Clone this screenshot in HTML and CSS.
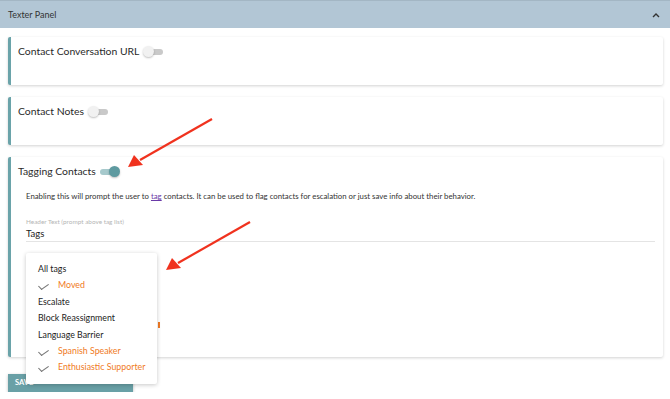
FILE: index.html
```html
<!DOCTYPE html>
<html lang="en">
<head>
    <meta charset="UTF-8">
    <title>Texter Panel</title>
    <link rel="stylesheet" href="styles.css">
</head>
<body>
    <div class="panel-header">
        <span>Texter Panel</span>
        <svg class="chevron" width="8" height="6" viewBox="0 0 8 6"><path d="M1 5 L4 2 L7 5" fill="none" stroke="#333" stroke-width="1.4"/></svg>
    </div>

    <div class="panel-body">
        <section class="card short">
            <div class="card-title">
                Contact Conversation URL
                <span class="toggle"><span class="knob"></span></span>
            </div>
        </section>

        <section class="card short">
            <div class="card-title">
                Contact Notes
                <span class="toggle"><span class="knob"></span></span>
            </div>
        </section>

        <section class="card tall">
            <div class="card-title">
                Tagging Contacts
                <span class="toggle on"><span class="knob"></span></span>
            </div>
            <p class="desc">Enabling this will prompt the user to <a href="#">tag</a> contacts. It can be used to flag contacts for escalation or just save info about their behavior.</p>
            <div class="field">
                <label>Header Text (prompt above tag list)</label>
                <div class="field-value">Tags</div>
            </div>
            <span class="chip-edge"></span>
        </section>

        <button class="save-button">Save</button>
    </div>

    <ul class="tag-menu">
        <li>All tags</li>
        <li class="checked">Moved</li>
        <li>Escalate</li>
        <li>Block Reassignment</li>
        <li>Language Barrier</li>
        <li class="checked">Spanish Speaker</li>
        <li class="checked">Enthusiastic Supporter</li>
    </ul>

    <svg class="arrows" width="670" height="399" viewBox="0 0 670 399">
        <line x1="212" y1="119" x2="140" y2="160" stroke="#f0321e" stroke-width="2.2"/>
        <polygon points="128,167 134,155 143,165" fill="#f0321e"/>
        <line x1="250" y1="222" x2="178" y2="263" stroke="#f0321e" stroke-width="2.2"/>
        <polygon points="166,270 172,258 181,268" fill="#f0321e"/>
    </svg>
</body>
</html>
```

FILE: styles.css
```css
body {
    margin: 0;
    font-family: "Lato", "Noto Sans", sans-serif;
    color: #222;
    background-color: #fff;
    position: relative;
}

.panel-header {
    height: 27px;
    background-color: #b2c6d5;
    border-top: 1px solid #a3b6c4;
    display: flex;
    align-items: center;
    justify-content: space-between;
    padding: 0 10px 0 8px;
    font-size: 9px;
    color: #333;
}

.panel-body {
    padding: 9px 7px 0 8px;
}

.card {
    background-color: #fff;
    border-left: 3px solid #6aa3a9;
    box-shadow: 0 1px 3px rgba(0, 0, 0, 0.18);
    border-radius: 2px;
    margin-bottom: 12px;
    padding: 8px 8px 0 7px;
    box-sizing: border-box;
}

.card.short {
    height: 48px;
}

.card.tall {
    height: 200px;
    position: relative;
}

.card-title {
    display: flex;
    align-items: center;
    gap: 4px;
    font-size: 10.4px;
    height: 12px;
    color: #2a2a2a;
}

.toggle {
    position: relative;
    width: 20px;
    height: 11px;
    display: inline-block;
}

.toggle::before {
    content: "";
    position: absolute;
    left: 3px;
    right: 0;
    top: 3px;
    height: 6px;
    border-radius: 3px;
    background-color: #c9c9c9;
}

.toggle .knob {
    position: absolute;
    left: 0;
    top: 0;
    width: 11px;
    height: 11px;
    border-radius: 50%;
    background-color: #f1f1f1;
    box-shadow: 0 1px 2px rgba(0, 0, 0, 0.25);
}

.toggle.on::before {
    background-color: #a6c9cc;
    left: 0;
    right: 3px;
}

.toggle.on .knob {
    left: auto;
    right: 0;
    background-color: #5e9aa0;
}

.desc {
    font-size: 7.8px;
    margin: 14px 0 0 8px;
    color: #333;
}

.desc a {
    color: #6a3aa8;
}

.field {
    margin: 17px 0 0 8px;
    border-bottom: 1px solid #e4e4e4;
    padding-bottom: 2px;
}

.field label {
    display: block;
    font-size: 6.4px;
    color: #b5b5b5;
}

.field-value {
    font-size: 9.5px;
    margin-top: 3px;
    color: #222;
}

.chip-edge {
    position: absolute;
    left: 147px;
    top: 165px;
    width: 1.5px;
    height: 6px;
    background-color: #f07a24;
}

.save-button {
    width: 125px;
    height: 18px;
    margin-top: 0;
    border: none;
    background-color: #69a0a6;
    color: #fff;
    font-family: "Lato", sans-serif;
    font-weight: bold;
    font-size: 7.5px;
    text-align: left;
    padding: 0 7px;
    box-shadow: 0 1px 3px rgba(0, 0, 0, 0.25);
    text-transform: uppercase;
}

.tag-menu {
    position: absolute;
    left: 26px;
    top: 253px;
    width: 131px;
    margin: 0;
    padding: 8px 0 0 12px;
    box-sizing: border-box;
    height: 131px;
    list-style: none;
    background-color: #fff;
    box-shadow: 0 1px 4px rgba(0, 0, 0, 0.22);
    border-radius: 2px;
}

.tag-menu li {
    height: 16.4px;
    line-height: 16.4px;
    font-size: 8.8px;
    color: #222;
    position: relative;
}

.tag-menu li.checked {
    color: #f07a24;
    padding-left: 20px;
}

.tag-menu li.checked::before {
    content: "";
    position: absolute;
    left: 3px;
    top: 4px;
    width: 4px;
    height: 8px;
    border-right: 1px solid #777;
    border-bottom: 1px solid #777;
    transform: rotate(45deg) skewX(-10deg);
}

.arrows {
    position: absolute;
    left: 0;
    top: 0;
    pointer-events: none;
}
```
